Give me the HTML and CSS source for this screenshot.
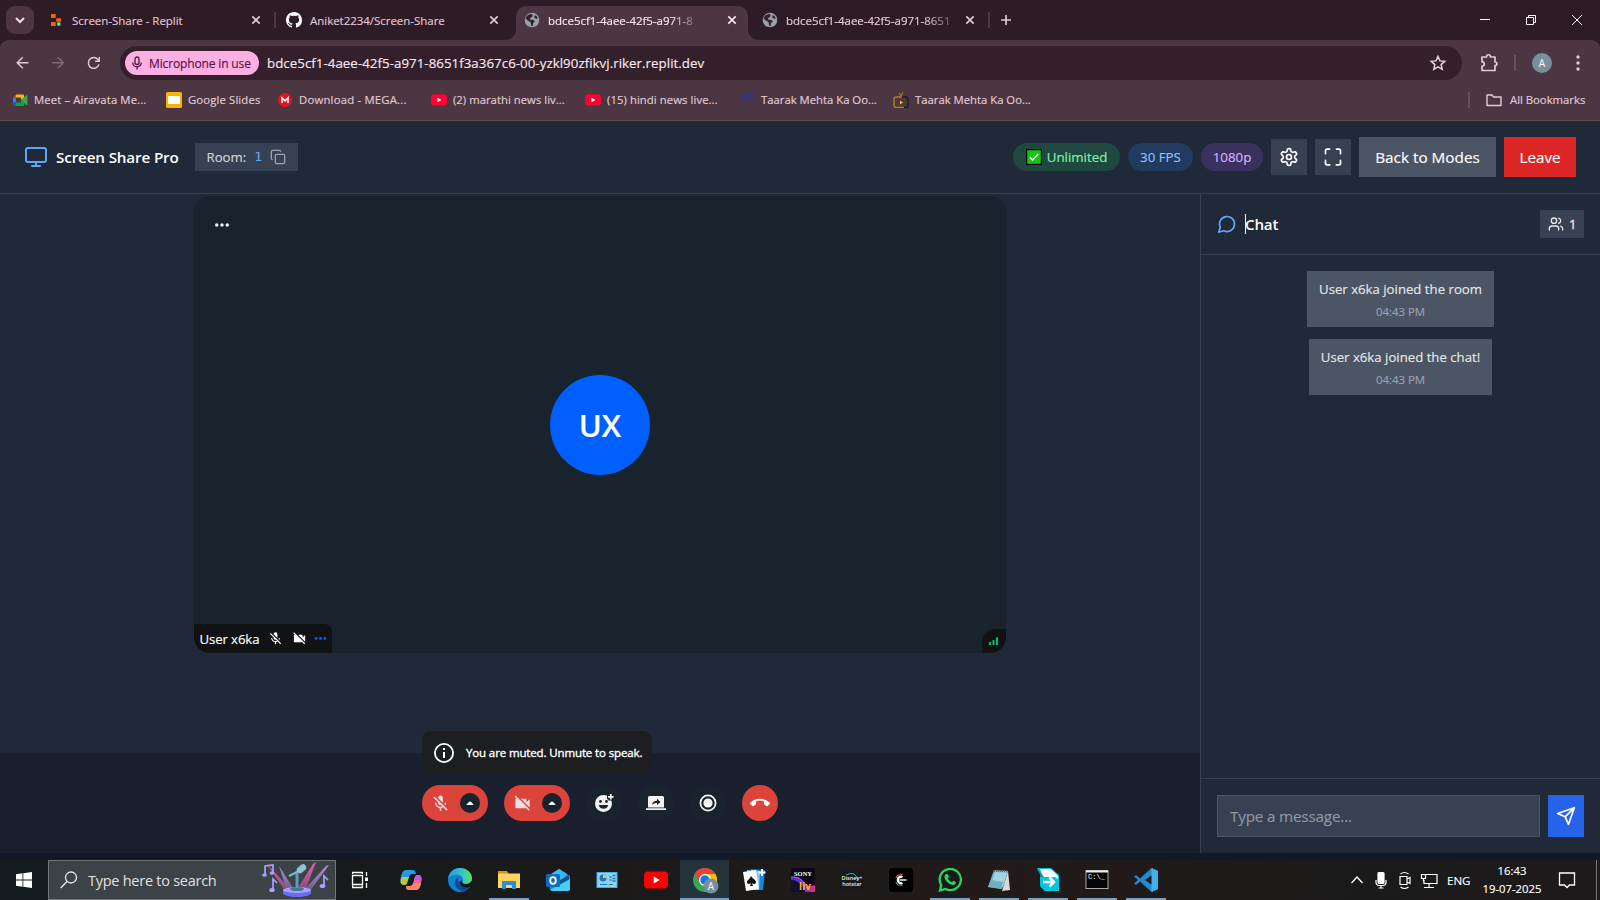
FILE: index.html
```html
<!DOCTYPE html>
<html lang="en">
<head>
<meta charset="utf-8">
<title>Screen Share Pro</title>
<link rel="stylesheet" href="styles.css">
</head>
<body>
<svg class="defs" width="0" height="0">
  <symbol id="x" viewBox="0 0 16 16"><path d="M4.300 4.300l7.400 7.400M11.700 4.300l-7.400 7.400" stroke="currentColor" stroke-width="1.700" fill="none"/></symbol>
  <symbol id="globe" viewBox="0 0 16 16"><circle cx="8" cy="8" r="7.300" fill="#9aa0a6"/><path d="M3 3.500L7 1.700l1.800 1.200L8 5 6.300 6l-.4 1.400L9.600 8l1.200 1.500-1.800 1.800-.3 2.700-1.600-.2L6.700 10.500 4.300 8.700 1.500 6.500zM10.500 3.500l2 .2 1.300 2.800-1.800.3-1.800-1.300z" fill="#35242e"/></symbol>
  <symbol id="yt" viewBox="0 0 24 24"><rect x="0" y="3.500" width="24" height="17" rx="4.500" fill="#ff0033"/><path d="M9.700 8.500l6 3.500-6 3.500z" fill="#fff"/></symbol>
  <symbol id="micoff" viewBox="0 0 24 24"><path fill="currentColor" d="M19 11h-1.700c0 .74-.16 1.430-.43 2.050l1.230 1.230c.56-.98.9-2.090.9-3.280zm-4.020.17c0-.06.02-.11.02-.17V5c0-1.660-1.340-3-3-3S9 3.340 9 5v.18l5.980 5.990zM4.270 3L3 4.270l6.010 6.010V11c0 1.660 1.330 3 2.990 3 .22 0 .44-.03.65-.08l1.660 1.660c-.71.33-1.500.52-2.310.52-2.760 0-5.300-2.100-5.300-5.100H5c0 3.410 2.720 6.230 6 6.720V21h2v-3.280c.91-.13 1.770-.45 2.540-.9L19.730 21 21 19.730 4.270 3z"/></symbol>
  <symbol id="camoff" viewBox="0 0 24 24"><path fill="currentColor" d="M21 6.500l-4 4V7c0-.55-.45-1-1-1H9.820L21 17.180V6.500zM3.270 2L2 3.270 4.730 6H4c-.55 0-1 .45-1 1v10c0 .55.45 1 1 1h12c.21 0 .39-.08.54-.18L19.730 21 21 19.730 3.270 2z"/></symbol>
  <symbol id="dots" viewBox="0 0 24 24"><circle cx="5" cy="12" r="2.300"/><circle cx="12" cy="12" r="2.300"/><circle cx="19" cy="12" r="2.300"/></symbol>
</svg>

<div class="tabs">
  <div class="tabsearch"><svg width="16" height="16" viewBox="0 0 16 16" fill="none" stroke="#f1dde7" stroke-width="2"><path d="M4 6l4 4 4-4"/></svg></div>
  <div class="tab sep">
    <svg class="fav" viewBox="0 0 16 16"><path fill="#f26207" d="M3 2h4.700v4H3zM8.300 6.300h4.700v3.400H8.300zM3 10h4.700v4H3z"/><circle cx="10.800" cy="12" r="1.900" fill="#5fdd7a"/></svg>
    <span class="tt t1">Screen-Share - Replit</span><svg class="close"><use href="#x"/></svg>
  </div>
  <div class="tab">
    <svg class="fav" viewBox="0 0 16 16"><path fill="#fff" d="M8 0C3.580 0 0 3.580 0 8c0 3.540 2.290 6.530 5.470 7.590.4.070.55-.17.55-.38 0-.19-.01-.82-.01-1.490-2.010.37-2.530-.49-2.690-.94-.09-.23-.48-.94-.82-1.130-.28-.15-.68-.52-.01-.53.63-.01 1.080.58 1.230.82.72 1.210 1.870.87 2.330.66.070-.52.28-.87.51-1.070-1.780-.2-3.640-.89-3.640-3.950 0-.87.31-1.590.82-2.150-.08-.2-.36-1.020.08-2.120 0 0 .67-.21 2.200.82.64-.18 1.320-.27 2-.27s1.360.09 2 .27c1.530-1.040 2.200-.82 2.200-.82.44 1.100.16 1.920.08 2.120.51.56.82 1.270.82 2.150 0 3.070-1.870 3.750-3.650 3.950.29.25.54.73.54 1.480 0 1.070-.01 1.930-.01 2.200 0 .21.15.46.55.38A8.010 8.010 0 0 0 16 8c0-4.420-3.580-8-8-8z"/></svg>
    <span class="tt t2">Aniket2234/Screen-Share</span><svg class="close"><use href="#x"/></svg>
  </div>
  <div class="tab active">
    <svg class="fav"><use href="#globe"/></svg>
    <span class="tt fade">bdce5cf1-4aee-42f5-a971-8</span><svg class="close"><use href="#x"/></svg>
  </div>
  <div class="tab sep">
    <svg class="fav"><use href="#globe"/></svg>
    <span class="tt fade">bdce5cf1-4aee-42f5-a971-8651</span><svg class="close"><use href="#x"/></svg>
  </div>
  <svg class="plus" width="16" height="16" viewBox="0 0 16 16" stroke="#e5c9d6" stroke-width="1.700"><path d="M3 8h10M8 3v10"/></svg>
  <div class="winbtns">
    <svg width="46" height="40" viewBox="0 0 46 40"><path d="M18 19.500h10" stroke="#fff"/></svg>
    <svg width="46" height="40" viewBox="0 0 46 40" fill="none" stroke="#fff"><path d="M18.500 17.500h7v7h-7zM20.500 17.500v-2h7v7h-2"/></svg>
    <svg width="46" height="40" viewBox="0 0 46 40" fill="none" stroke="#fff"><path d="M18 15l10 10M28 15L18 25"/></svg>
  </div>
</div>

<div class="toolbar">
  <div class="nav">
    <svg viewBox="0 0 24 24" fill="none" stroke="#e5c9d6" stroke-width="2.300"><path d="M21 12H4M12 3.500L3.500 12l8.500 8.500"/></svg>
    <svg viewBox="0 0 24 24" fill="none" stroke="#816a76" stroke-width="2.300"><path d="M3 12h17M12 3.500l8.500 8.500-8.500 8.500"/></svg>
    <svg viewBox="0 0 24 24" fill="none" stroke="#e5c9d6" stroke-width="2.300"><path d="M20 14.500A8.300 8.300 0 1 1 18.500 7.200L20 9M20.500 3v6.500H14"/></svg>
  </div>
  <div class="omni">
    <div class="chip"><svg width="14" height="14" viewBox="0 0 14 14" fill="none" stroke="#5a1145" stroke-width="1.300"><rect x="5" y="1" width="4" height="7.500" rx="2"/><path d="M2.700 6.500a4.300 4.300 0 0 0 8.600 0M7 10.800V13.500"/></svg><span>Microphone in use</span></div>
    <span class="url">bdce5cf1-4aee-42f5-a971-8651f3a367c6-00-yzkl90zfikvj.riker.replit.dev</span>
    <svg class="star" width="18" height="18" viewBox="0 0 24 24" fill="none" stroke="#e5d3dc" stroke-width="2"><path d="M12 3.300l2.600 5.900 6.400.6-4.800 4.300 1.400 6.300-5.600-3.300-5.600 3.300 1.400-6.300L3 9.800l6.400-.6z"/></svg>
  </div>
  <svg class="ext" width="20" height="20" viewBox="0 0 20 20" fill="none" stroke="#e5c9d6" stroke-width="1.700"><path d="M3 4h4.500c0-3 4-3 4 0H16v5c2.500 0 2.500 3.500 0 3.500V17.500H3v-4.300c3 0 3-4.400 0-4.400z" stroke-linejoin="round"/></svg>
  <i class="vbar"></i>
  <b class="ava">A</b>
  <svg class="menu" width="16" height="20" viewBox="0 0 16 20" fill="#e5c9d6"><circle cx="8" cy="4" r="1.700"/><circle cx="8" cy="10" r="1.700"/><circle cx="8" cy="16" r="1.700"/></svg>
</div>

<div class="marks">
  <a class="m1"><svg viewBox="0 0 16 16"><path d="M4 2.500h7a1 1 0 0 1 1 1V6L9 8V5.500H4z" fill="#fbbc04"/><path d="M4 2.500v3H1z" fill="#ea4335"/><path d="M1 5.500h3v5H1z" fill="#2684fc"/><path d="M1 10.500h3v3.500H2.500A1.500 1.500 0 0 1 1 12.500z" fill="#0066da"/><path d="M4 10.500h5V8l3 2v3a1 1 0 0 1-1 1H4z" fill="#00ac47"/><path d="M9 8l5.500-5 .9.500v9.500l-.9.300z" fill="#36a852"/></svg><span>Meet – Airavata Me...</span></a>
  <a class="m2"><svg viewBox="0 0 16 16"><rect width="16" height="16" rx="1.500" fill="#f8b500"/><rect x="2" y="4" width="12" height="8" fill="#fff"/></svg><span>Google Slides</span></a>
  <a class="m3"><svg viewBox="0 0 16 16"><circle cx="8" cy="8" r="7" fill="#e3141e"/><path d="M5 11V6L8 8.900 11 6V11" stroke="#fff" stroke-width="1.600" fill="none"/></svg><span>Download - MEGA...</span></a>
  <a class="m4"><svg><use href="#yt"/></svg><span>(2) marathi news liv...</span></a>
  <a class="m5"><svg><use href="#yt"/></svg><span>(15) hindi news live...</span></a>
  <a class="m6"><svg viewBox="0 0 16 16" fill="none" stroke="#2438ad" stroke-width="1"><path d="M0 4.500L4 2l3-1M3 3l1 5.500M6 14L7.500 2 9.500 9l2.500-7 2-1 .5 14.500M8 12l2.500-7"/></svg><span>Taarak Mehta Ka Oo...</span></a>
  <a class="m7"><svg viewBox="0 0 16 16" fill="none"><path d="M8 4L6 1M8 4l2-4" stroke="#b8891d"/><path d="M11 15.500H3A2 2 0 0 1 1 13V6.500A2 2 0 0 1 3 5h6" stroke="#b07f1c" stroke-width="1.400"/><path d="M9 5h4a2 2 0 0 1 2 2v6.500a2 2 0 0 1-2 2h-2" stroke="#211c20" stroke-width="1.400"/><path d="M7 8.500l3 2-3 2z" fill="#ffc00a"/></svg><span>Taarak Mehta Ka Oo...</span></a>
  <i class="vbar"></i>
  <a class="all"><svg viewBox="0 0 16 16" fill="none" stroke="#e2ccd6" stroke-width="1.400"><path d="M1 3h5l1.500 2H15v8.500H1z" stroke-linejoin="round"/></svg><span>All Bookmarks</span></a>
</div>

<header class="head">
  <svg class="logo" width="24" height="24" viewBox="0 0 24 24" fill="none" stroke="#60a5fa" stroke-width="2" stroke-linecap="round"><rect x="2" y="3" width="20" height="14" rx="2"/><path d="M8 21h8M12 17v4"/></svg>
  <h1>Screen Share Pro</h1>
  <div class="room"><span class="rl">Room:</span><span class="rn">1</span><svg width="16" height="16" viewBox="0 0 24 24" fill="none" stroke="#9ca3af" stroke-width="2"><rect x="8" y="8" width="14" height="14" rx="2"/><path d="M4 16a2 2 0 0 1-2-2V4a2 2 0 0 1 2-2h10a2 2 0 0 1 2 2"/></svg></div>
  <div class="right">
    <span class="pill green"><svg width="16" height="16" viewBox="0 0 16 16"><rect x=".6" y=".6" width="14.800" height="14.800" fill="#16c60c" stroke="#000" stroke-width="1.200"/><path d="M3.800 8.200l2.700 2.700 5.700-6" fill="none" stroke="#fff" stroke-width="1.500"/></svg><span>Unlimited</span></span>
    <span class="pill blue"><span>30 FPS</span></span>
    <span class="pill purple"><span>1080p</span></span>
    <button class="sq"><svg width="20" height="20" viewBox="0 0 24 24" fill="none" stroke="#fff" stroke-width="2" stroke-linejoin="round"><path d="M12.220 2h-.44a2 2 0 0 0-2 2v.18a2 2 0 0 1-1 1.730l-.43.25a2 2 0 0 1-2 0l-.15-.08a2 2 0 0 0-2.730.73l-.22.38a2 2 0 0 0 .73 2.730l.15.1a2 2 0 0 1 1 1.720v.51a2 2 0 0 1-1 1.740l-.15.09a2 2 0 0 0-.73 2.730l.22.38a2 2 0 0 0 2.730.73l.15-.08a2 2 0 0 1 2 0l.43.25a2 2 0 0 1 1 1.730V20a2 2 0 0 0 2 2h.44a2 2 0 0 0 2-2v-.18a2 2 0 0 1 1-1.730l.43-.25a2 2 0 0 1 2 0l.15.08a2 2 0 0 0 2.730-.73l.22-.39a2 2 0 0 0-.73-2.730l-.15-.08a2 2 0 0 1-1-1.740v-.5a2 2 0 0 1 1-1.740l.15-.09a2 2 0 0 0 .73-2.730l-.22-.38a2 2 0 0 0-2.730-.73l-.15.08a2 2 0 0 1-2 0l-.43-.25a2 2 0 0 1-1-1.730V4a2 2 0 0 0-2-2z"/><circle cx="12" cy="12" r="3"/></svg></button>
    <button class="sq"><svg width="20" height="20" viewBox="0 0 24 24" fill="none" stroke="#fff" stroke-width="2" stroke-linecap="round"><path d="M8 2.500H5a2 2 0 0 0-2 2V8M21 8V4.500a2 2 0 0 0-2-2h-3M3 16v3.500a2 2 0 0 0 2 2h3M16 21.500h3a2 2 0 0 0 2-2V16"/></svg></button>
    <button class="back"><span>Back to Modes</span></button>
    <button class="leave"><span>Leave</span></button>
  </div>
</header>

<div class="app">
  <main class="stage">
    <section class="upper">
      <div class="video">
        <svg class="more" width="18" height="18"><use href="#dots"/></svg>
        <div class="face"><span>UX</span></div>
        <div class="name"><span>User x6ka</span><svg class="n1"><use href="#micoff"/></svg><svg class="n2"><use href="#camoff"/></svg><svg class="n3"><use href="#dots"/></svg></div>
        <div class="signal"><svg width="12" height="12" viewBox="0 0 12 12"><path d="M2 7v3M5.500 5V10M9 2.300V10" stroke="#00d084" stroke-width="1.800"/></svg></div>
      </div>
    </section>
    <section class="controls">
      <div class="toast"><svg width="24" height="24" viewBox="0 0 24 24" fill="#fff"><path d="M11 7h2v2h-2zM11 11h2v6h-2z"/><circle cx="12" cy="12" r="9.100" fill="none" stroke="#fff" stroke-width="1.800"/></svg><span>You are muted. Unmute to speak.</span></div>
      <div class="row">
        <div class="dual"><svg width="19" height="19"><use href="#micoff"/></svg><b><svg width="8" height="6" viewBox="0 0 8 6"><path d="M.5 5C.5 4.300 3 1.500 4 1.500S7.500 4.300 7.500 5z" fill="#fff"/></svg></b></div>
        <div class="dual"><svg width="19" height="19"><use href="#camoff"/></svg><b><svg width="8" height="6" viewBox="0 0 8 6"><path d="M.5 5C.5 4.300 3 1.500 4 1.500S7.500 4.300 7.500 5z" fill="#fff"/></svg></b></div>
        <div class="rnd"><svg width="20" height="20" viewBox="0 0 20 20"><circle cx="9.500" cy="10.500" r="8.500" fill="#f2f3f4"/><circle cx="6.500" cy="8.500" r="1.400" fill="#19232d"/><circle cx="12.500" cy="8.500" r="1.400" fill="#19232d"/><path d="M4.800 12h9.400a4.800 4.800 0 0 1-9.400 0z" fill="#19232d"/><path d="M16.500.5v7M13 4h7" stroke="#19232d" stroke-width="4.500"/><path d="M16.800 1v5.600M14 3.800h5.600" stroke="#f2f3f4" stroke-width="1.800"/></svg></div>
        <div class="rnd"><svg width="20" height="20" viewBox="0 0 20 20"><path d="M3.500 3h13a1.500 1.500 0 0 1 1.500 1.500V14.500H2v-10A1.500 1.500 0 0 1 3.500 3zM0 15.300h20V17H0z" fill="#f2f3f4"/><path d="M6 12c.5-3 2.300-4 5-4.200V5.700l3.500 3.200L11 12V10c-2 0-3.500.4-5 2z" fill="#19232d"/></svg></div>
        <div class="rnd"><svg width="20" height="20" viewBox="0 0 20 20"><circle cx="10" cy="10" r="7.600" fill="none" stroke="#f2f3f4" stroke-width="1.700"/><circle cx="10" cy="10" r="4.600" fill="#f2f3f4"/></svg></div>
        <div class="rnd red"><svg width="20" height="20" viewBox="0 0 24 24"><path fill="#fff" d="M12 9c-1.600 0-3.150.25-4.600.72v3.100c0 .39-.23.74-.56.9-.98.49-1.870 1.120-2.660 1.850-.18.18-.43.28-.7.28-.28 0-.53-.11-.71-.29L.29 13.080a.96.96 0 0 1-.29-.7c0-.28.11-.53.29-.71C3.340 8.780 7.460 7 12 7s8.660 1.780 11.710 4.670c.18.18.29.43.29.71 0 .28-.11.53-.29.71l-2.480 2.480c-.18.18-.43.29-.71.29-.27 0-.52-.11-.7-.28a11.270 11.270 0 0 0-2.670-1.850.99.99 0 0 1-.56-.9v-3.100C15.150 9.250 13.600 9 12 9z"/></svg></div>
      </div>
    </section>
  </main>
  <aside class="chat">
    <div class="chead">
      <svg width="20" height="20" viewBox="0 0 24 24" fill="none" stroke="#60a5fa" stroke-width="2" stroke-linejoin="round"><path d="M7.900 20A9 9 0 1 0 4 16.100L2 22z"/></svg>
      <i class="caret"></i><h2>Chat</h2>
      <div class="count"><svg width="16" height="16" viewBox="0 0 24 24" fill="none" stroke="#e5e7eb" stroke-width="2" stroke-linecap="round"><path d="M16 21v-2a4 4 0 0 0-4-4H6a4 4 0 0 0-4 4v2"/><circle cx="9" cy="7" r="4"/><path d="M22 21v-2a4 4 0 0 0-3-3.870M16 3.130a4 4 0 0 1 0 7.750"/></svg><span>1</span></div>
    </div>
    <div class="msgs">
      <div class="msg w1"><p>User x6ka joined the room</p><small>04:43 PM</small></div>
      <div class="msg w2"><p>User x6ka joined the chat!</p><small>04:43 PM</small></div>
    </div>
    <div class="compose">
      <div class="input"><span>Type a message...</span></div>
      <button class="send"><svg width="20" height="20" viewBox="0 0 24 24" fill="none" stroke="#fff" stroke-width="2" stroke-linejoin="round"><path d="M22 2L15 22l-4-9-9-4zM22 2L11 13"/></svg></button>
    </div>
  </aside>
</div>

<footer class="taskbar">
  <div class="start"><svg width="16" height="16" viewBox="0 0 16 16" fill="#fff"><path d="M0 2.200l6.500-.9v6.300H0zM7.300 1.200L16 0v7.600H7.300zM0 8.400h6.500v6.300L0 13.800zM7.300 8.400H16V16l-8.700-1.200z"/></svg></div>
  <div class="search">
    <svg class="mag" width="18" height="18" viewBox="0 0 18 18" fill="none" stroke="#e8e8e8" stroke-width="1.300"><circle cx="11" cy="6.500" r="5.500"/><path d="M7 10.500L.7 17"/></svg>
    <span>Type here to search</span>
    <svg class="party" width="70" height="36" viewBox="0 0 70 36">
      <defs><linearGradient id="pk" x2="0" y2="1"><stop stop-color="#f05cb4"/><stop offset="1" stop-color="#7c5079"/></linearGradient><linearGradient id="pu" x2="0" y2="1"><stop stop-color="#b98ae0"/><stop offset="1" stop-color="#6c5b84"/></linearGradient></defs>
      <path d="M5 2l25 27h-7z" fill="url(#pk)"/><path d="M17 4l16 25h-8z" fill="url(#pu)"/><path d="M54 0L43 29h-9L51 2z" fill="url(#pk)"/><path d="M67 3L48 29h-7L64 4z" fill="url(#pu)"/>
      <path d="M21 28v3c0 2 6 4 14 4s14-2 14-4v-3z" fill="#6b6df0"/><ellipse cx="35" cy="28" rx="14" ry="3" fill="#a5a0ff"/><ellipse cx="35" cy="27" rx="7" ry="2" fill="#397999"/>
      <path d="M35 26V11" stroke="#5c9cba" stroke-width="3"/><path d="M27 14l12-6" stroke="#78b5cd" stroke-width="2.500"/><path d="M38 8l3-2.500" stroke="#8fc0d6" stroke-width="6.500" stroke-linecap="round"/>
      <g fill="#a8a0ff" stroke="#a8a0ff" stroke-width="1.700"><path d="M3 13V4l8-1v8" fill="none"/><ellipse cx="2.500" cy="13" rx="1.500" ry="1"/><ellipse cx="10" cy="11" rx="1.500" ry="1"/><path d="M11 28V17l4 4" fill="none"/><ellipse cx="10" cy="28" rx="2" ry="1.200"/><path d="M62 24V14l4 4" fill="none"/><ellipse cx="60.500" cy="24" rx="2" ry="1.200"/></g>
    </svg>
  </div>
  <div class="apps">
    <div class="first"><svg viewBox="0 0 24 24" fill="none" stroke="#fff" stroke-width="1.300"><path d="M4.500 7.500h10v9h-10zM4.600 6V4M14.400 6V4M4 4.500h11M4 19.500h11M4.600 19.500v-2M14.400 19.500v-2M18.500 4v4M18.500 15v5"/><path d="M18.500 9.500v3.500" stroke-width="3"/></svg></div>
    <div><svg viewBox="0 0 24 24"><path d="M7 2h7c2 0 2 1 3 4h-4c-2 0-3 2-4 6s-2 5-4 5c-4 0-4-4-3-8s2-7 5-7z" fill="#249be5"/><path d="M2 11c-1 3 0 6 3 6s3-2 4-5l1-3H2.500z" fill="#b2cc3c"/><path d="M17 22h-7c-2 0-3-1-3-4h4c2 0 3-2 4-6s2-5 4-5c4 0 4 4 3 8s-2 7-5 7z" fill="#ee629b"/><path d="M7 18h4c2 0 3-1 3.500-3H22c-1 4-2 7-5 7h-7c-2 0-3-1-3-4z" fill="#fa8567"/><path d="M15 12c1-4 2-5 4-5 3 0 4 2 3.500 5z" fill="#b761de"/></svg></div>
    <div><svg viewBox="0 0 24 24"><defs><linearGradient id="eg"><stop stop-color="#1f9bde"/><stop offset=".6" stop-color="#35c6c3"/><stop offset="1" stop-color="#62dc5d"/></linearGradient></defs><circle cx="12" cy="12" r="12" fill="#1280d0"/><path d="M0 11C1 3 7 0 12 0c7 0 12 5 12 10 0 4-3 6-6 6-4 0-4-2-3-4 0-3-3-6-7-5-4 0-7 2-8 4z" fill="url(#eg)"/><path d="M9.500 9c-5 5-2 13 5 14 3 0 6-2 7-4-5 2-11-1-11-6z" fill="#0b4b95"/><path d="M14.500 12.500c-1 2 0 3.500 3 3.500 3 0 5-1 6.500-3.500v4l-2.500 2.500c-5 2-10-1-10-5z" fill="#15181a"/></svg></div>
    <div class="run"><svg viewBox="0 0 24 24"><path d="M1 3h9l2 3H1z" fill="#d99512"/><path d="M1 5.500h22V20H1z" fill="#ffd45f"/><path d="M5 13h14v8h-4v-4H9v4H5z" fill="#328dd9"/></svg></div>
    <div><svg viewBox="0 0 24 24"><path d="M2 8L13 1l11 7v12a2 2 0 0 1-2 2H4z" fill="#1f8ddb"/><path d="M5 6l8-5 8 5-5 6H5z" fill="#36bdf5"/><path d="M14 12l9-5v5l-9 6z" fill="#12508f"/><path d="M4 22L24 11v10a2 2 0 0 1-2 2H6z" fill="#45cef8"/><rect x="0" y="6" width="14" height="13" rx="1.500" fill="#0f6cbd"/><ellipse cx="7" cy="12.500" rx="2.800" ry="3.300" fill="none" stroke="#fff" stroke-width="1.800"/></svg></div>
    <div><svg viewBox="0 0 24 24"><path d="M1.500 4h21v16h-21z" fill="#4aaee5"/><path d="M2.500 5h19v14h-19z" fill="#8fd0f3"/><circle cx="8" cy="10" r="3.500" fill="#1879be"/><path d="M8 10V6.500a3.500 3.500 0 0 1 3.500 3.500z" fill="#f4c246"/><path d="M14.500 9h2M14.500 12h2M17.500 7.500h3M17.500 10.500h3M17.500 13h3" stroke="#1879be" stroke-width="1.500"/><path d="M5 16.500h13" stroke="#1879be"/><path d="M12 16.500h2" stroke="#f4a246" stroke-width="2"/></svg></div>
    <div><svg viewBox="0 0 24 24"><rect x="0" y="3.500" width="24" height="17" rx="4" fill="#f00"/><path d="M9.700 8.500l6 3.500-6 3.500z" fill="#fff"/></svg></div>
    <div class="run cur"><svg viewBox="0 0 24 24" overflow="visible"><circle cx="12" cy="12" r="12" fill="#34a853"/><path d="M12 12L1.600 6A12 12 0 0 1 22.400 6z" fill="#ea4335"/><path d="M12 6h10.400A12 12 0 0 1 12 24l5-9z" fill="#fbbc04"/><path d="M1.600 6L7 15l5-9L5 2z" fill="#ea4335"/><circle cx="12" cy="12" r="6" fill="#fff"/><circle cx="12" cy="12" r="4.700" fill="#1a73e8"/><circle cx="18" cy="18" r="7.500" fill="#78909c"/><text x="18" y="22" class="atxt">A</text></svg></div>
    <div><svg viewBox="0 0 24 24"><path d="M9 1l14 1-2 20-12 0z" fill="#1787d8"/><path d="M5 2l13 1-1 19-11-1z" fill="#86c9ee"/><path d="M1 4l13-2 3 19-13 2z" fill="#fff"/><path d="M9 8c2 3 5 4 5 6s-2 3-4 1l1 3H8l1-3c-2 2-4 1-4-1s3-3 4-6z" fill="#111"/><path d="M20 1v7M16.500 4.500h7" stroke="#fff" stroke-width="2"/></svg></div>
    <div><svg viewBox="0 0 24 24"><defs><linearGradient id="sl"><stop stop-color="#2a3bd0"/><stop offset=".6" stop-color="#8a2ccf"/><stop offset="1" stop-color="#e0366f"/></linearGradient></defs><rect width="24" height="24" rx="2" fill="#0b0713"/><path d="M0 9c9-2 12 4 15 7s6 2 9 1v7H14C11 14 4 13 0 13z" fill="url(#sl)"/><path d="M0 12c9 0 12 8 14 12H0z" fill="#111030"/><path d="M0 9c10 0 12 5 14 8" stroke="#f13daf" fill="none"/><text x="12" y="7.500" class="sony">SONY</text><text x="14" y="22" class="liv">liv</text></svg></div>
    <div><svg viewBox="0 0 24 24"><rect width="24" height="24" rx="2" fill="#1a1819"/><path d="M6 7q9-5 12 5" stroke="#2bb4c7" fill="none"/><text x="12" y="12" class="dis">Disney+</text><text x="12" y="18" class="dis">hotstar</text></svg></div>
    <div><svg viewBox="0 0 24 24"><rect width="24" height="24" rx="3" fill="#000"/><path d="M13.500 9a3.300 3.300 0 1 0 0 6" fill="none" stroke="#fff" stroke-width="2.300"/><path d="M6.800 10l2-2.800L13.500 6.500" fill="none" stroke="#e87a35" stroke-width="1.200"/><path d="M6.800 14l2 2.800 4.700.7" fill="none" stroke="#36b46e" stroke-width="1.200"/><path d="M10.500 12h7" stroke="#ccc" stroke-width="1.800"/></svg></div>
    <div class="run"><svg viewBox="0 0 24 24"><path d="M2 22.500l1.200-5.500A10.600 10.600 0 1 1 7.500 21z" fill="#181a18" stroke="#2bd366" stroke-width="2.300"/><path d="M8 6l2 .3.900 2.500-1.200 1.500c1 2 2.300 3.200 4.200 4l1.500-1.500 2.500 1.200c.2 2-1 3-3 3C10 16.500 6 11 6.500 8.500 6.700 7 7.300 6.300 8 6z" fill="#2bd366"/></svg></div>
    <div class="run"><svg viewBox="0 0 24 24"><path d="M7 2l14 1-6 18-14-2z" fill="#75b8ce"/><path d="M8 4l12 1-4 14-12-1z" fill="#a3d4df"/><path d="M4 12l12 2-2 7-13-2z" fill="#72aec2"/><path d="M21 3l2 19-8 1z" fill="#d8dad9"/><path d="M7 3h14" stroke="#58696f" stroke-width="2" stroke-dasharray="1 1"/></svg></div>
    <div class="run"><svg viewBox="0 0 24 24"><path d="M1 0h14l8 7v16H9l-5-5V6z" fill="#00c6df"/><path d="M4 1h11l7 7v3H6V6z" fill="#fff"/><path d="M1 0l7 9H4V6z" fill="#0a8bac"/><path d="M5 9h14l4 3v11H9l-4-4z" fill="#00c6df"/><path d="M7 14h11M13.500 9.500l4.500 4.500-4.500 4.500" stroke="#fff" stroke-width="2.500" fill="none"/></svg></div>
    <div class="run"><svg viewBox="0 0 24 24"><rect x="1" y="2.500" width="22" height="18" fill="#050505" stroke="#aaa"/><path d="M1 3.500h22" stroke="#eee" stroke-width="2"/><text x="3" y="11" class="cmd">C:\_</text></svg></div>
    <div class="run"><svg viewBox="0 0 24 24"><path d="M17.500 0L24 3v18l-6.500 3L6 13.500 2 17l-2-1.500L4 12 0 8.500 2 7l4 3.500zM18 7l-7 5 7 5z" fill="#2588d0" fill-rule="evenodd"/><path d="M17.500 0L24 3v18l-6.500 3z" fill="#45aeef"/></svg></div>
  </div>
  <div class="tray">
    <svg width="14" height="20" viewBox="0 0 14 20" fill="none" stroke="#fff" stroke-width="1.300"><path d="M1.500 13L7 7l5.500 6"/></svg>
    <svg width="14" height="20" viewBox="0 0 14 20" fill="none" stroke="#fff" stroke-width="1.200"><rect x="4" y="2.500" width="6" height="11" rx="1" fill="#fff"/><path d="M2 10v2.500a3 3 0 0 0 3 3h4a3 3 0 0 0 3-3V10M7 15.500v2M4.500 18h5"/></svg>
    <svg width="14" height="20" viewBox="0 0 14 20" fill="none" stroke="#fff" stroke-width="1.200"><path d="M2 6.500h7v8H2zM9 9l3-1.500v6L9 12M2.500 4q4-3 8 0M2.500 17q4 3 8 0"/></svg>
    <svg class="net" width="18" height="20" viewBox="0 0 18 20" fill="none" stroke="#fff" stroke-width="1.200"><path d="M6 4.500h11v9H4V10M4 17.500h10M9 13.500v4M1.500 4.500h4v4h-4zM3.500 8.500v3"/></svg>
    <span class="eng">ENG</span>
    <div class="clock"><span>16:43</span><span>19-07-2025</span></div>
    <svg class="note" width="18" height="20" viewBox="0 0 18 20" fill="none" stroke="#fff" stroke-width="1.300"><path d="M1.500 3h15v12h-5L9 17.500 6.500 15h-5z"/></svg>
    <i class="edge"></i>
  </div>
</footer>
</body>
</html>
```
FILE: styles.css
```css
* { box-sizing: border-box; }
body { margin: 0; width: 1600px; height: 900px; overflow: hidden; background: #111827; font-family: "Open Sans", "Noto Sans", sans-serif; color: #fff; display: flex; flex-direction: column; }
svg { display: block; flex: none; }
span, h1, h2 { white-space: nowrap; }
span, small, .msg p { -webkit-text-stroke: .15px currentColor; }
button { border: 0; padding: 0; font-family: inherit; color: #fff; display: flex; align-items: center; justify-content: center; }
.defs { position: absolute; }

/* Tab strip */
.tabs { height: 40px; flex: none; background: #2d1b25; display: flex; align-items: center; }
.tabsearch { width: 28px; height: 28px; margin: 0 6px; border-radius: 9px; background: #4b3641; display: flex; align-items: center; justify-content: center; }
.tab { position: relative; width: 238px; height: 40px; display: flex; align-items: center; padding-left: 8px; color: #e2c6d3; }
.fav { width: 16px; height: 16px; }
.tt { margin-left: 8px; font-size: 11.500px; letter-spacing: -.03px; }
.fade { -webkit-mask-image: linear-gradient(90deg, #000 84%, rgba(0,0,0,.35) 100%); }
.close { position: absolute; left: 208px; top: 12px; width: 16px; height: 16px; }
.sep::after { content: ""; position: absolute; left: 234px; top: 12px; width: 2px; height: 16px; background: #4b3641; }
.active { color: #f8e6ef; }
.active::before { content: ""; position: absolute; z-index: 0; left: 0; top: 6px; width: 232px; height: 34px; border-radius: 10px 10px 0 0; background: #4b3641; }
.active > * { z-index: 1; }
.active .fav, .active .tt { position: relative; }
.active::after { content: ""; position: absolute; left: -10px; top: 30px; width: 252px; height: 10px; background: radial-gradient(circle at 0 0, transparent 9.500px, #4b3641 10px) 0 0 / 10px 10px no-repeat, radial-gradient(circle at 100% 0, transparent 9.500px, #4b3641 10px) 100% 0 / 10px 10px no-repeat; }
.plus { margin-left: 6px; }
.winbtns { margin-left: auto; display: flex; }

/* Toolbar */
.toolbar { height: 40px; flex: none; background: radial-gradient(circle at 8px 8px, #4b3641 7.500px, #2d1b25 8px) 0 0 / 8px 8px no-repeat, radial-gradient(circle at 0 8px, #4b3641 7.500px, #2d1b25 8px) 100% 0 / 8px 8px no-repeat, #4b3641; display: flex; align-items: center; padding-top: 6px; }
.nav { display: flex; gap: 20px; padding-left: 14.500px; width: 120px; }
.nav svg { width: 15.500px; height: 15.500px; }
.omni { width: 1342px; height: 34px; border-radius: 17px; background: #33202b; display: flex; align-items: center; padding: 0 15px 0 5px; }
.chip { width: 134px; height: 24px; border-radius: 12px; background: #fbafe3; display: flex; align-items: center; padding-left: 5px; gap: 5px; color: #5a1145; font-size: 12px; letter-spacing: -.14px; }
.url { margin-left: 8px; font-size: 13.300px; color: #f8e8f0; letter-spacing: .04px; }
.star { margin-left: auto; }
.ext { margin-left: 17px; }
.vbar { width: 2px; height: 16px; background: #65505b; }
.toolbar .vbar { margin-left: 15px; }
.ava { margin-left: 16px; width: 20px; height: 20px; border-radius: 50%; background: #78909c; font-size: 10px; font-weight: 400; display: flex; align-items: center; justify-content: center; }
.menu { margin-left: 18px; }

/* Bookmarks */
.marks { height: 41px; flex: none; background: #4b3641; border-bottom: 1px solid #5d4953; display: flex; align-items: center; padding: 0 0 1px 12px; font-size: 11.300px; color: #e2ccd6; }
.marks a { display: flex; gap: 6px; align-items: center; }
.marks svg { width: 16px; height: 16px; }
.m1 { width: 154px; letter-spacing: .12px; } .m2 { width: 111px; letter-spacing: .14px; } .m3 { width: 154px; letter-spacing: .22px; } .m4 { width: 154px; letter-spacing: .03px; }
.m5 { width: 154px; letter-spacing: .08px; } .m6 { width: 154px; } .m7 { width: 575px; }
.marks .all { margin-left: 16px; gap: 8px; }

/* App header */
.head { height: 73px; flex: none; background: #1f2937; border-bottom: 1px solid #374151; display: flex; align-items: center; padding: 0 24px 1px; }
.head h1 { margin: 0 0 0 8px; width: 123px; font-size: 15.200px; font-weight: 600; letter-spacing: -.13px; }
.room { width: 103px; height: 28px; margin-left: 16px; padding-left: 11.500px; background: #374151; display: flex; align-items: center; font-size: 13.200px; color: #d1d5db; }
.rl { width: 48px; } .rn { color: #60a5fa; width: 15.500px; font-family: "DejaVu Sans Mono", monospace; font-size: 12.500px; }
.right { margin-left: auto; display: flex; align-items: center; gap: 8px; }
.pill { height: 28px; border-radius: 14px; display: flex; align-items: center; justify-content: center; gap: 5px; font-size: 13.300px; }
.green { width: 107px; background: #1f4840; color: #86efac; }
.blue { width: 65px; background: #213a5f; color: #93c5fd; }
.purple { width: 62px; background: #3b315f; color: #d8b4fe; }
.sq { width: 36px; height: 36px; background: #374151; }
.back { width: 137px; height: 40px; background: #4b5563; font-size: 15.300px; }
.leave { width: 72px; height: 40px; background: #dc2626; font-size: 15.200px; }

/* Stage */
.app { height: 659px; flex: none; display: flex; }
.stage { width: 1200px; display: flex; flex-direction: column; }
.upper { height: 559px; background: #1f2937; padding: 2px 0 0 194px; }
.video { position: relative; width: 812px; height: 457px; border-radius: 16px; overflow: hidden; background: #19232d; display: flex; align-items: center; justify-content: center; }
.more { position: absolute; left: 19px; top: 20px; fill: #f2f2f2; }
.face { width: 100px; height: 100px; border-radius: 50%; background: #005fff; font-size: 31px; font-weight: 600; display: flex; align-items: center; justify-content: center; }
.name { position: absolute; left: 0; bottom: 0; width: 138px; height: 29px; background: #101214; border-radius: 0 8px 0 0; display: flex; align-items: center; padding-left: 5.500px; font-size: 13.200px; letter-spacing: -.1px; }
.name span { width: 68px; }
.name svg { width: 15px; height: 15px; }
.n2 { margin-left: 9px; } .n3 { margin-left: 6.500px; fill: #005fff; }
.signal { position: absolute; right: 0; bottom: 0; width: 24px; height: 24px; background: #101214; border-radius: 14px 0 0 0; padding: 6px; }
.controls { height: 100px; background: #1a1f2e; display: flex; flex-direction: column; align-items: flex-start; padding-left: 422px; }
.toast { position: relative; width: 230px; height: 43px; margin-top: -22px; border-radius: 9px; background: #1c1e22; display: flex; align-items: center; padding-left: 10px; gap: 10px; font-size: 11.500px; letter-spacing: -.13px; }
.toast span, .count span { -webkit-text-stroke-width: .35px; }
.row { display: flex; align-items: center; gap: 16px; margin-top: 11px; }
.dual { width: 66px; height: 36px; border-radius: 18px; background: #dc433b; display: flex; align-items: center; justify-content: space-between; padding: 0 8px 0 9px; color: #e8e2e3; }
.dual b { width: 20px; height: 20px; border-radius: 50%; background: #19232d; display: flex; align-items: center; justify-content: center; }
.rnd { width: 36px; height: 36px; border-radius: 50%; background: #19232d; display: flex; align-items: center; justify-content: center; }
.red { background: #dc433b; }

/* Chat */
.chat { width: 400px; background: #1f2937; border-left: 1px solid #374151; display: flex; flex-direction: column; }
.chead { height: 61px; border-bottom: 1px solid #374151; display: flex; align-items: center; padding: 0 16px; }
.caret { width: 1px; height: 20px; background: #fff; margin-left: 8px; }
.chead h2 { margin: 0 0 0 -1px; font-size: 15.200px; font-weight: 600; letter-spacing: -.2px; }
.count { margin-left: auto; width: 44px; height: 28px; background: #374151; display: flex; align-items: center; padding-left: 8px; gap: 5px; font-size: 13.200px; color: #e5e7eb; }
.msgs { flex: 1; display: flex; flex-direction: column; align-items: center; padding-top: 16px; gap: 12px; }
.msg { height: 56px; background: #4b5563; text-align: center; padding-top: 8px; }
.w1 { width: 187px; } .w2 { width: 183px; }
.msg p { margin: 0; font-size: 13.200px; line-height: 20px; color: #e5e7eb; white-space: nowrap; }
.msg small { display: block; margin-top: 5px; font-size: 11.400px; line-height: 16px; color: #9ca3af; }
.compose { height: 75px; border-top: 1px solid #374151; padding: 16px; display: flex; gap: 8px; }
.input { width: 323px; height: 42px; background: #374151; border: 1px solid #4b5563; padding-left: 12px; display: flex; align-items: center; font-size: 15.200px; letter-spacing: -.15px; color: #8f97a3; }
.send { width: 36px; height: 42px; background: #2563eb; }

/* Taskbar */
.taskbar { margin-top: auto; height: 40px; flex: none; background: linear-gradient(90deg, #141b1e 0, #1a1a1a 34%, #211b19 65%, #1b1a1a 85%, #1d1a1b 100%); display: flex; }
.start { width: 48px; display: flex; align-items: center; justify-content: center; }
.search { width: 288px; height: 40px; background: #3c4346; border: 1px solid #72777a; display: flex; align-items: center; padding-left: 11px; color: #e0e0e0; font-size: 14.500px; letter-spacing: -.26px; }
.search span { width: 174px; margin-left: 10px; -webkit-text-stroke-width: 0; }
.apps { display: flex; }
.apps div { width: 49.040px; height: 40px; padding: 8px 12.500px; position: relative; flex: none; }
.apps .first { width: 50px; padding-left: 12px; }
.apps svg { width: 24px; height: 24px; }
.run::after { content: ""; position: absolute; left: 4.500px; bottom: 0; width: 40px; height: 2px; background: #7a9fc1; }
.cur { background: #25333a; }
.cur::after { left: 0; width: 49px; }
.atxt { font: 10px "Open Sans", sans-serif; fill: #fff; text-anchor: middle; }
.sony { font: bold 6.500px "Liberation Serif", serif; fill: #fff; text-anchor: middle; }
.liv { font: bold 10px "Open Sans", sans-serif; fill: #f9b619; text-anchor: middle; }
.dis { font: 600 5.500px "Open Sans", sans-serif; fill: #e9eff5; text-anchor: middle; }
.cmd { font: 7px "Liberation Mono", monospace; fill: #fff; }
.tray { margin-left: auto; display: flex; align-items: center; gap: 10px; }
.net { margin-left: -2px; }
.eng { font-size: 11.500px; width: 27px; margin-left: -1px; }
.clock { width: 70px; display: flex; flex-direction: column; align-items: center; font-size: 11.300px; line-height: 18px; margin-left: -7px; }
.note { margin-left: 1px; }
.edge { width: 1px; height: 40px; background: #777; margin: 0 3px 0 10px; }
```
